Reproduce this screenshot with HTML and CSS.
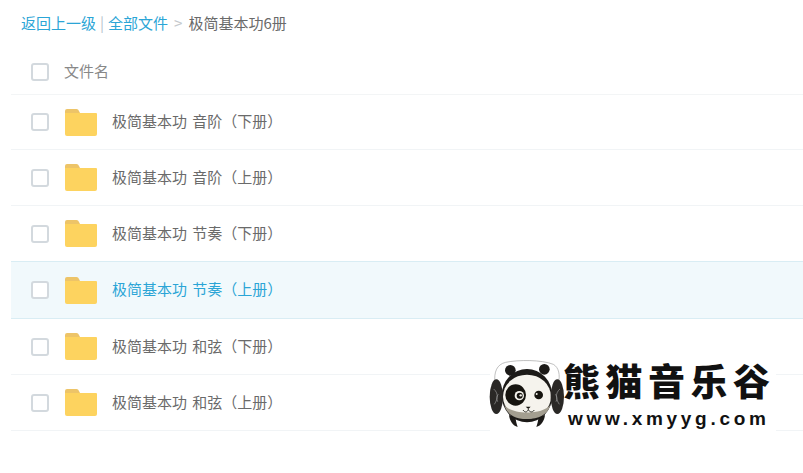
FILE: index.html
```html
<!DOCTYPE html>
<html lang="zh">

<head>
    <meta charset="UTF-8">
    <title>极简基本功6册</title>
    <link rel="stylesheet" href="styles.css">
</head>

<body>
    <div class="crumbs">
        <a href="#">返回上一级</a>
        <span class="pipe">|</span>
        <a href="#">全部文件</a>
        <span class="gt">&gt;</span>
        <span class="current">极简基本功6册</span>
    </div>

    <div class="list">
        <div class="head">
            <span class="check"></span>
            <span class="head-name">文件名</span>
        </div>
        <div class="row">
            <span class="check"></span>
            <svg class="folder" viewBox="0 0 32 27"><path class="tab" d="M0 2a2 2 0 0 1 2-2h9a3 3 0 0 1 3 2l1 2H0z"/><path class="body" d="M0 4h31a1 1 0 0 1 1 1v20a2 2 0 0 1-2 2H2a2 2 0 0 1-2-2z"/></svg>
            <span class="name">极简基本功 音阶（下册）</span>
        </div>
        <div class="row">
            <span class="check"></span>
            <svg class="folder" viewBox="0 0 32 27"><path class="tab" d="M0 2a2 2 0 0 1 2-2h9a3 3 0 0 1 3 2l1 2H0z"/><path class="body" d="M0 4h31a1 1 0 0 1 1 1v20a2 2 0 0 1-2 2H2a2 2 0 0 1-2-2z"/></svg>
            <span class="name">极简基本功 音阶（上册）</span>
        </div>
        <div class="row">
            <span class="check"></span>
            <svg class="folder" viewBox="0 0 32 27"><path class="tab" d="M0 2a2 2 0 0 1 2-2h9a3 3 0 0 1 3 2l1 2H0z"/><path class="body" d="M0 4h31a1 1 0 0 1 1 1v20a2 2 0 0 1-2 2H2a2 2 0 0 1-2-2z"/></svg>
            <span class="name">极简基本功 节奏（下册）</span>
        </div>
        <div class="row active">
            <span class="check"></span>
            <svg class="folder" viewBox="0 0 32 27"><path class="tab" d="M0 2a2 2 0 0 1 2-2h9a3 3 0 0 1 3 2l1 2H0z"/><path class="body" d="M0 4h31a1 1 0 0 1 1 1v20a2 2 0 0 1-2 2H2a2 2 0 0 1-2-2z"/></svg>
            <span class="name">极简基本功 节奏（上册）</span>
        </div>
        <div class="row">
            <span class="check"></span>
            <svg class="folder" viewBox="0 0 32 27"><path class="tab" d="M0 2a2 2 0 0 1 2-2h9a3 3 0 0 1 3 2l1 2H0z"/><path class="body" d="M0 4h31a1 1 0 0 1 1 1v20a2 2 0 0 1-2 2H2a2 2 0 0 1-2-2z"/></svg>
            <span class="name">极简基本功 和弦（下册）</span>
        </div>
        <div class="row">
            <span class="check"></span>
            <svg class="folder" viewBox="0 0 32 27"><path class="tab" d="M0 2a2 2 0 0 1 2-2h9a3 3 0 0 1 3 2l1 2H0z"/><path class="body" d="M0 4h31a1 1 0 0 1 1 1v20a2 2 0 0 1-2 2H2a2 2 0 0 1-2-2z"/></svg>
            <span class="name">极简基本功 和弦（上册）</span>
        </div>
    </div>

    <div class="logo">
        <svg class="panda" viewBox="0 0 240 240">
            <!-- headband -->
            <path d="M30 85C26 50 36 28 62 22C100 14 170 14 205 28C222 38 226 60 220 85" fill="none" stroke="#a0a0a0" stroke-width="2"/>
            <!-- ears -->
            <circle cx="76" cy="46" r="16" fill="#1c1a18"/>
            <circle cx="178" cy="43" r="16" fill="#1c1a18"/>
            <!-- feet -->
            <path d="M72 180C74 198 84 212 98 216C94 204 92 196 92 186z" fill="#1c1a18"/>
            <path d="M180 180C178 198 168 212 154 216C158 204 160 196 160 186z" fill="#1c1a18"/>
            <!-- head -->
            <ellipse cx="126" cy="122" rx="76" ry="80" fill="#1c1a18"/>
            <ellipse cx="126" cy="125" rx="72" ry="66" fill="#f5f3ed"/>
            <path d="M58 150C80 180 172 180 196 150C188 180 160 192 126 192C92 192 66 180 58 150z" fill="#a39e90"/>
            <!-- earcups -->
            <ellipse cx="34" cy="125" rx="20" ry="52" fill="#2a2826"/>
            <ellipse cx="217" cy="125" rx="20" ry="52" fill="#2a2826"/>
            <path d="M26 102C40 114 40 130 28 148M40 118C34 124 34 132 38 140" fill="none" stroke="#9a9a9a" stroke-width="2"/>
            <path d="M225 102C211 114 211 130 223 148M211 118C217 124 217 132 213 140" fill="none" stroke="#9a9a9a" stroke-width="2"/>
            <!-- eyes -->
            <ellipse cx="92" cy="120" rx="31" ry="32" fill="#16140f"/>
            <circle cx="103" cy="122" r="14" fill="#f5f3ed"/>
            <circle cx="104" cy="122" r="9" fill="#16140f"/>
            <circle cx="107" cy="121" r="3.500" fill="#f5f3ed"/>
            <ellipse cx="161" cy="120" rx="13" ry="13" fill="#16140f"/>
            <circle cx="155" cy="117" r="3" fill="#f5f3ed"/>
            <!-- nose and mouth -->
            <path d="M122 155h15l-7 7z" fill="#16140f"/>
            <path d="M114 165C120 174 127 172 130 163C133 172 142 174 148 165" fill="none" stroke="#16140f" stroke-width="2.500"/>
        </svg>
        <div class="brand">
            <div class="brand-cn">熊猫音乐谷</div>
            <div class="brand-url">www.xmyyg.com</div>
        </div>
    </div>
</body>

</html>
```

FILE: styles.css
```css
* {
    box-sizing: border-box;
}

html,
body {
    height: 100%;
    overflow: hidden;
}

body {
    margin: 0;
    position: relative;
    background-color: #fff;
    color: #6a6a6a;
    font-family: "Noto Sans CJK SC", "Noto Sans", sans-serif;
    font-size: 15px;
}

a {
    color: #2ba5d6;
    text-decoration: none;
}

.crumbs {
    display: flex;
    align-items: center;
    height: 48px;
    padding: 0 0 2px 21px;
    line-height: 20px;
}

.pipe {
    margin: 0 4px;
    color: #b8c4cc;
}

.gt {
    margin: 0 6px;
    color: #c4c8cc;
}

.list {
    margin-left: 11px;
}

.head {
    display: flex;
    align-items: center;
    height: 47px;
    padding-left: 20px;
    border-bottom: 1px solid #f3f5f6;
}

.head .check {
    margin-top: 2px;
}

.head-name {
    margin: 0 0 1px 15px;
    color: #888;
}

.row {
    display: flex;
    align-items: center;
    height: 56px;
    padding-left: 20px;
    border-bottom: 1px solid #f1f4f6;
}

.head + .row {
    height: 55px;
}

.row.active {
    height: 58px;
    margin-top: -1px;
    background-color: #f1f9fc;
    border-top: 1px solid #d9edf4;
    border-bottom: 1px solid #d9edf4;
}

.row.active .name {
    color: #2ba5d6;
}

.check {
    flex: none;
    width: 18px;
    height: 18px;
    border: 2px solid #d3d9de;
    border-radius: 3px;
    background-color: #fff;
}

.folder {
    flex: none;
    width: 32px;
    height: 27px;
    margin-left: 16px;
}

.folder .tab {
    fill: #edc468;
}

.folder .body {
    fill: #fdd35f;
}

.name {
    margin: 0 0 3px 15px;
    word-spacing: 2px;
    white-space: pre;
}

.logo {
    position: absolute;
    left: 485px;
    top: 355px;
    width: 291px;
    height: 78px;
    display: flex;
    background: linear-gradient(to right, transparent 5px, #fff 5px);
}

.panda {
    flex: none;
    width: 80px;
    height: 80px;
}

.brand {
    margin-left: -2px;
    color: #111;
}

.brand-cn {
    font-size: 37px;
    font-weight: 900;
    line-height: 50px;
    letter-spacing: 5.500px;
    white-space: nowrap;
}

.brand-url {
    margin: 3px 0 0 5px;
    font-family: "Liberation Sans", sans-serif;
    font-size: 19px;
    font-weight: 700;
    line-height: 22px;
    letter-spacing: 3.700px;
    white-space: nowrap;
}
```
